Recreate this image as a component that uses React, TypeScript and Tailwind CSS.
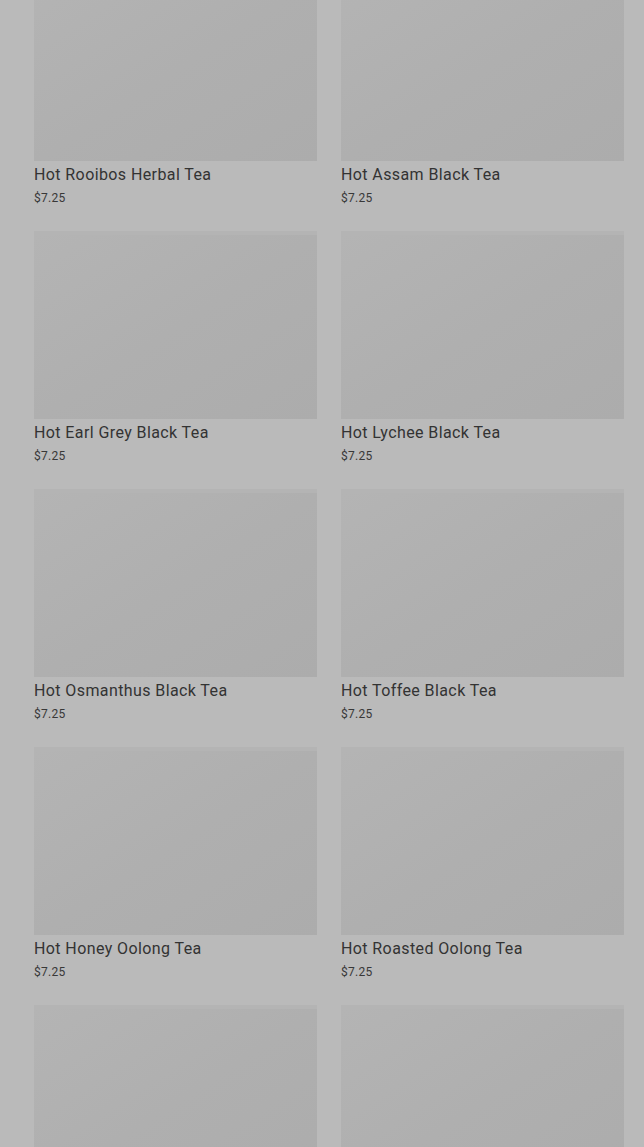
const teas = [
  'Hot Rooibos Herbal Tea',
  'Hot Assam Black Tea',
  'Hot Earl Grey Black Tea',
  'Hot Lychee Black Tea',
  'Hot Osmanthus Black Tea',
  'Hot Toffee Black Tea',
  'Hot Honey Oolong Tea',
  'Hot Roasted Oolong Tea',
];

function TeaImage() {
  return (
    <div className="h-[188px] border-t-4 border-[#b4b4b4] bg-linear-to-br from-[#b4b4b4] via-[#afafaf] to-[#acacac]" />
  );
}

function TeaCard({ name }: { name: string }) {
  return (
    <div className="flex flex-col">
      <TeaImage />
      <p className="mt-[2px] text-[16px] leading-6 tracking-[0.4px] text-[#333333]">{name}</p>
      <p className="mt-[2px] text-[12px] leading-[18px] tracking-[0.3px] text-[#383838]">$7.25</p>
    </div>
  );
}

export default function App() {
  return (
    <div
      className="h-[1147px] overflow-hidden bg-[#bababa]"
      style={{ fontFamily: 'Roboto, "Liberation Sans", sans-serif' }}
    >
      <div className="-mt-[27px] grid grid-cols-2 gap-x-6 gap-y-6 pl-[34px] pr-5">
        {teas.map((name) => (
          <TeaCard key={name} name={name} />
        ))}
        {/* next row, only the top of the pictures is in view */}
        <TeaImage />
        <TeaImage />
      </div>
    </div>
  );
}
